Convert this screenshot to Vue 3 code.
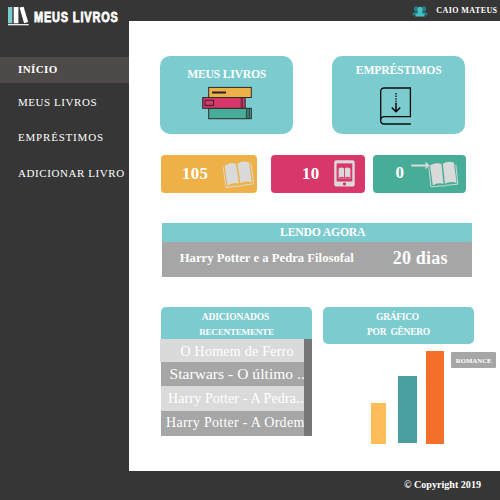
<script setup>
const menu = [
  { label: 'INÍCIO', key: 'home', active: true },
  { label: 'MEUS LIVROS', key: 'books' },
  { label: 'EMPRÉSTIMOS', key: 'loans' },
  { label: 'ADICIONAR LIVRO', key: 'add' }
]
const recent = [
  { title: 'O Homem de Ferro', key: 'r1' },
  { title: 'Starwars - O último ..', key: 'r2' },
  { title: 'Harry Potter - A Pedra..', key: 'r3' },
  { title: 'Harry Potter - A Ordem', key: 'r4' }
]
const bars = [
  { key: 'yellow', width: 15, height: 41 },
  { key: 'teal', width: 19.3, height: 67.5 },
  { key: 'orange', width: 17.4, height: 92.5 }
]
</script>

<template>
  <div class="app">
    <aside class="sidebar">
      <div class="brand">
        <svg class="brand-icon" width="21" height="20" viewBox="0 0 21 20">
          <rect x="0" y="1" width="4.3" height="16.3" fill="#7bcbcf" />
          <rect x="5.7" y="1" width="4.7" height="16.3" fill="#fff" />
          <path d="M11.5 1.6 15.6.7 20.2 16.1 16.1 17.3Z" fill="#fff" />
          <rect x="0" y="18.1" width="20.7" height="1.2" fill="#fff" />
        </svg>
        <span class="brand-name">MEUS LIVROS</span>
      </div>
      <nav class="menu">
        <a v-for="m in menu" :key="m.key" class="menu-item" :class="[m.key, { active: m.active }]">{{ m.label }}</a>
      </nav>
    </aside>

    <header class="header">
      <svg class="users" width="16" height="11" viewBox="0 0 16 11">
        <g fill="#287f85">
          <ellipse cx="4.1" cy="2.9" rx="2.2" ry="2.7" />
          <ellipse cx="11.9" cy="2.9" rx="2.2" ry="2.7" />
          <path d="M.3 9.2Q.2 6.6 3 6h10q2.8.6 2.7 3.2Z" />
        </g>
        <ellipse cx="8" cy="4.1" rx="2.6" ry="3.4" fill="#43c0c5" />
        <path d="M3.3 10.5Q3.2 7.7 6.3 7.1h3.4q3.1.6 3 3.4Z" fill="#43c0c5" />
      </svg>
      <span class="user-name">CAIO MATEUS</span>
    </header>

    <main class="content">
      <section class="cards">
        <div class="card mine">
          <h2>MEUS LIVROS</h2>
          <svg width="50" height="34" viewBox="0 0 50 34" stroke="#2b2b2b" stroke-width="1">
            <rect x="6.7" y="1.4" width="42.6" height="10.1" fill="#edb148" />
            <path d="M10 6.5h14" stroke-width="2" stroke="#222" />
            <rect x="6.7" y="22.3" width="42.6" height="10.4" fill="#48ad98" />
            <path d="M44.4 22.5v10M46 22.5v10M47.6 22.5v10" stroke-width=".8" />
            <rect x=".7" y="11.5" width="42.5" height="10.8" fill="#d83769" />
            <rect x="3" y="14.2" width="8.5" height="5.2" fill="none" />
            <path d="M39.2 11.5v10.8M40.6 11.5v10.8" stroke-width=".7" />
          </svg>
        </div>
        <div class="card loans-card">
          <h2>EMPRÉSTIMOS</h2>
          <svg width="32" height="38" viewBox="0 0 32 38" fill="none" stroke="#0c0c0c" stroke-width="1.3">
            <path d="M30.8 37H4a3.2 3.2 0 0 1-3.3-3.5V4.5Q.7 1 4.2 1H30.4V29.6H4.5Q.7 29.6.7 33.5" />
            <path d="M16 6v11" stroke-dasharray="1.5 1.1" />
            <path d="M16 16v8.5M11.8 20.6 16 24.7l4.2-4.1" stroke-width="1.5" />
          </svg>
        </div>
      </section>

      <section class="stats">
        <div class="stat owned">
          <b>105</b>
          <svg width="31" height="28" viewBox="0 0 31 28">
            <g transform="rotate(-8 15.5 14)" fill="#dadada">
              <path d="M3 4Q9 .8 14.5 3.4V23.5Q9 21 3 24Z" />
              <path d="M16 3.4Q21.5.8 27.5 4V24Q21.5 21 16 23.5Z" />
              <path d="M1.3 5V25.8H13.4Q15.2 27 17.2 25.8H29.2V5" fill="none" stroke="#dadada" stroke-width=".9" />
            </g>
          </svg>
        </div>
        <div class="stat digital">
          <b>10</b>
          <svg width="21" height="27" viewBox="0 0 21 27">
            <rect x=".2" y=".2" width="20.5" height="26.4" rx="2.2" fill="#dadada" />
            <rect x="2.6" y="3.4" width="15.7" height="18.1" fill="#d83769" />
            <path d="M4.9 8.2Q7.5 7 10 8.3V17.6Q7.5 16.2 4.9 17.4ZM10.9 8.3Q13.4 7 16 8.2V17.4Q13.4 16.2 10.9 17.6Z" fill="#dadada" />
            <path d="M4.3 8.8v9.5h12.2V8.8" fill="none" stroke="#dadada" stroke-width=".4" />
            <circle cx="10.5" cy="23.9" r="1.6" fill="#d83769" />
          </svg>
        </div>
        <div class="stat lent">
          <b>0</b>
          <svg width="48" height="28" viewBox="0 0 48 28">
            <path d="M.3 5.5H16" stroke="#dadada" stroke-width="2" />
            <path d="M14.5 1.8 18.8 5.5 14.5 9.2Z" fill="#dadada" />
            <g transform="translate(17.5 1) rotate(-6 15.5 14) scale(.97)" fill="#dadada">
              <path d="M2.7 3Q9 .4 14.5 2.8V23.5Q9 21 3.4 24Z" />
              <path d="M16 2.8Q21.5 0 27.5 3L28 24Q21.5 21 16 23.5Z" />
              <path d="M1.3 5V25.3H13.4Q15.2 26.4 17.2 25.3H29.2V5" fill="none" stroke="#dadada" stroke-width=".9" />
            </g>
          </svg>
        </div>
      </section>

      <section class="reading">
        <h3>LENDO AGORA</h3>
        <div class="reading-row">
          <span class="reading-title">Harry Potter e a Pedra Filosofal</span>
          <span class="reading-days">20 dias</span>
        </div>
      </section>

      <section class="bottom">
        <div class="recent">
          <h4><span class="l1">ADICIONADOS</span><span class="l2">RECENTEMENTE</span></h4>
          <div class="recent-body">
            <div class="list">
              <div v-for="r in recent" :key="r.key" class="row" :class="r.key">{{ r.title }}</div>
            </div>
            <div class="scrollbar"></div>
          </div>
        </div>
        <div class="genre">
          <h4><span class="l3">GRÁFICO</span><span class="l4">POR&nbsp; GÊNERO</span></h4>
          <div class="chart">
            <div
              v-for="b in bars"
              :key="b.key"
              class="bar"
              :class="b.key"
              :style="{ width: b.width + 'px', height: b.height + 'px' }"
            ></div>
            <div class="legend">ROMANCE</div>
          </div>
        </div>
      </section>
    </main>

    <footer class="footer">© Copyright 2019</footer>
  </div>
</template>

<style>
body {
  margin: 0;
  background: #363636;
}
</style>

<style scoped>
.app {
  display: grid;
  grid-template-columns: 129px 371px;
  grid-template-rows: 21px 450px 29px;
  width: 500px;
  height: 500px;
  overflow: hidden;
  background: #363636;
  color: #fff;
  font-family: "Liberation Serif", "Times New Roman", serif;
  box-sizing: border-box;
}
.app * {
  box-sizing: border-box;
}
h2, h3, h4 {
  margin: 0;
  font-weight: bold;
}
svg {
  display: block;
  flex: none;
}
.sidebar {
  grid-row: 1 / 4;
}
.brand {
  display: flex;
  height: 57px;
  padding: 6px 0 0 8px;
}
.brand-name {
  margin-left: 5px;
  font: bold 14px/22px "Liberation Sans", Arial, sans-serif;
  letter-spacing: 1.1px;
  white-space: nowrap;
  transform: scaleX(.78);
  transform-origin: left;
  -webkit-text-stroke: .8px #fff;
}
.menu {
  display: flex;
  flex-direction: column;
}
.menu-item {
  height: 35.4px;
  padding-left: 18px;
  font-size: 11px;
  line-height: 35.4px;
  white-space: nowrap;
}
.menu-item.active {
  height: 26px;
  margin-bottom: 2px;
  line-height: 25.5px;
  font-weight: bold;
  background: #4e4a49;
}
.home { letter-spacing: .4px; }
.books { letter-spacing: .55px; }
.loans { letter-spacing: .8px; }
.add { letter-spacing: .58px; }
.header {
  display: flex;
  justify-content: flex-end;
  align-items: center;
  padding-right: 2.5px;
}
.users {
  margin: 1px 8px 0 0;
}
.user-name {
  font-size: 8px;
  font-weight: bold;
  letter-spacing: .42px;
}
.content {
  padding: 35.4px 0 0 31px;
  background: #fff;
}
.cards {
  display: flex;
  gap: 39px;
}
.card {
  display: flex;
  flex-direction: column;
  align-items: center;
  width: 133.3px;
  height: 78px;
  border-radius: 10px;
  background: #7bcbcf;
}
.card h2 {
  font-size: 11.7px;
  line-height: 16px;
}
.card.mine {
  padding-top: 10.6px;
}
.card.mine h2 {
  letter-spacing: -.25px;
  margin-bottom: 3px;
}
.card.loans-card {
  margin-left: -.3px;
  padding-top: 6.6px;
}
.card.loans-card h2 {
  letter-spacing: -.18px;
  margin-bottom: 8px;
}
.card.loans-card svg {
  margin-left: -6px;
}
.stats {
  display: flex;
  margin: 21px 0 0 1px;
}
.stat {
  display: flex;
  align-items: center;
  height: 37.5px;
  border-radius: 4px;
}
.stat b {
  font-size: 17px;
  letter-spacing: .3px;
}
.owned {
  width: 96px;
  padding-left: 21px;
  background: #edb148;
}
.owned svg {
  margin-left: 14.5px;
}
.digital {
  width: 94px;
  margin-left: 14px;
  padding-left: 31px;
  background: #d83769;
}
.digital svg {
  margin: -1px 0 0 14.5px;
}
.lent {
  width: 93px;
  margin-left: 8px;
  padding-left: 22.5px;
  background: #48ad98;
}
.lent b {
  padding-bottom: 2px;
}
.lent svg {
  margin-left: 6.5px;
}
.reading {
  width: 310px;
  margin: 30.1px 0 0 1.7px;
  background: #a6a6a6;
}
.reading h3 {
  height: 19px;
  padding-left: 12px;
  border-radius: 0 0 2px 2px;
  background: #7bcbcf;
  font-size: 11.7px;
  line-height: 19px;
  letter-spacing: -.2px;
  text-align: center;
}
.reading-row {
  display: flex;
  justify-content: space-between;
  align-items: center;
  height: 35px;
  padding: 0 24px 2px 18px;
  font-weight: bold;
}
.reading-title {
  font-size: 12.7px;
}
.reading-days {
  font-size: 18px;
  letter-spacing: .2px;
}
.bottom {
  display: flex;
  gap: 11px;
  margin: 30.4px 0 0 1px;
}
.recent,
.genre {
  width: 151px;
}
h4 {
  display: flex;
  flex-direction: column;
  align-items: center;
  padding-top: 2.3px;
  background: #7bcbcf;
  font-size: 9.5px;
  line-height: 15px;
}
.recent h4 {
  height: 32px;
  border-radius: 5px 5px 0 0;
}
.genre h4 {
  height: 36.5px;
  border-radius: 5px;
}
.l1 {
  letter-spacing: -.1px;
  margin-right: 2px;
}
.l2 {
  font-size: 9.2px;
  letter-spacing: -.29px;
}
.l3 { letter-spacing: -.3px; margin-right: 2px; }
.l4 { letter-spacing: -.27px; }
.recent-body {
  display: flex;
}
.list {
  width: 143px;
}
.row {
  overflow: hidden;
  height: 24.7px;
  font-size: 14px;
  line-height: 25px;
  white-space: nowrap;
}
.r1 {
  height: 22.3px;
  margin-left: -1px;
  padding-left: 20.5px;
  background: #dadada;
  line-height: 25px;
  letter-spacing: .25px;
}
.r2 {
  padding-left: 8.5px;
  background: #a6a6a6;
  font-size: 15.5px;
  line-height: 24px;
  letter-spacing: .05px;
}
.r3 {
  padding-left: 7px;
  background: #dadada;
  line-height: 26px;
  letter-spacing: .13px;
}
.r4 {
  padding-left: 5px;
  background: #a6a6a6;
  line-height: 23px;
  letter-spacing: .29px;
}
.scrollbar {
  width: 8px;
  background: #777;
}
.chart {
  display: flex;
  align-items: flex-end;
  height: 100px;
  padding-left: 48px;
}
.yellow { background: #ffbd59; }
.teal {
  margin: 0 0 .5px 11.8px;
  background: #4b9fa0;
}
.orange {
  margin-left: 9.4px;
  background: #f36f2b;
}
.legend {
  flex: none;
  align-self: flex-start;
  width: 45px;
  height: 16.3px;
  margin: 7.7px 0 0 7.3px;
  border-radius: 1px;
  background: #a6a6a6;
  font-size: 6.8px;
  font-weight: bold;
  line-height: 18px;
  text-align: center;
}
.bar {
  flex: none;
}
.footer {
  padding: 0 19px 2px 0;
  font-size: 10.1px;
  font-weight: bold;
  line-height: 27px;
  text-align: right;
}
</style>
